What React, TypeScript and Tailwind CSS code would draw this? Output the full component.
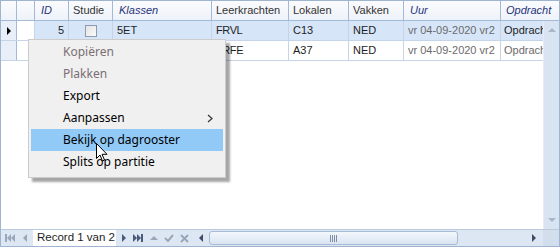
import React from "react";

const cols = [
  { key: "ind", w: 16 },
  { key: "sel", w: 18 },
  { key: "ID", w: 34, italic: true },
  { key: "Studie", w: 44 },
  { key: "Klassen", w: 99, italic: true },
  { key: "Leerkrachten", w: 77 },
  { key: "Lokalen", w: 60 },
  { key: "Vakken", w: 55 },
  { key: "Uur", w: 97, italic: true },
];

const rows = [
  { id: "5", klas: "5ET", lk: "FRVL", lok: "C13", vak: "NED", uur: "vr 04-09-2020 vr2", opd: "Opdracht", active: true },
  { id: "", klas: "", lk: "FRFE", lok: "A37", vak: "NED", uur: "vr 04-09-2020 vr2", opd: "Opdracht", active: false },
];

function Tri({ dir, className }: { dir: "l" | "r" | "u" | "d"; className?: string }) {
  const pts = { l: "5,0 5,8 1,4", r: "1,0 1,8 5,4", u: "0,5 8,5 4,1", d: "0,1 8,1 4,5" }[dir];
  const w = dir === "l" || dir === "r" ? 6 : 8;
  const h = dir === "l" || dir === "r" ? 8 : 6;
  return (
    <svg width={w} height={h} className={className}>
      <polygon points={pts} fill="currentColor" />
    </svg>
  );
}

function Cell({ w, children, className = "" }: { w: number; children?: React.ReactNode; className?: string }) {
  return (
    <div style={{ width: w }} className={`shrink-0 h-full border-r border-[#c5d4e8] flex items-center px-1 overflow-hidden whitespace-nowrap ${className}`}>
      {children}
    </div>
  );
}

export default function App() {
  return (
    <div className="w-[560px] h-[247px] bg-white relative overflow-hidden font-['Liberation_Sans',Arial,sans-serif] text-[11px] text-[#1e1e1e] select-none">
      <div className="w-full h-full border border-[#9fb4d1] flex flex-col">
        {/* header */}
        <div className="h-[20px] flex border-b border-[#a3b9d6] bg-gradient-to-b from-[#fafbfd] to-[#eef3fa] shrink-0">
          {cols.map((c) => (
            <div
              key={c.key}
              style={{ width: c.w }}
              className={`shrink-0 h-full border-r border-[#a3b9d6] flex items-center px-1 ${c.italic ? "italic text-[#27327a] pl-[6px]" : "text-[#333]"}`}
            >
              {c.key === "ind" || c.key === "sel" ? "" : c.key}
            </div>
          ))}
          <div className="flex-1 h-full flex items-center pl-[5px] italic text-[#27327a]">Opdracht</div>
        </div>

        {/* body */}
        <div className="flex-1 flex min-h-0">
          <div className="flex-1 flex flex-col">
            {rows.map((r, i) => (
              <div key={i} className={`h-[20px] flex border-b border-[#c5d4e8] ${r.active ? "bg-[#d7e5f8]" : "bg-white"}`}>
                <div className="w-[16px] shrink-0 h-full bg-[#e9eff8] border-r border-[#a3b9d6] flex items-center justify-center">
                  {r.active && <Tri dir="r" className="text-black" />}
                </div>
                <Cell w={18} className="bg-white" />
                <Cell w={34} className="justify-end">{r.id}</Cell>
                <Cell w={44} className="justify-center">
                  {r.active && <div className="w-[12px] h-[12px] border border-[#8d9bb0] bg-gradient-to-br from-[#e3e3e3] to-[#fbfbfb]" />}
                </Cell>
                <Cell w={99}>{r.klas}</Cell>
                <Cell w={77} className="tracking-[-0.4px]">{r.lk}</Cell>
                <Cell w={60}>{r.lok}</Cell>
                <Cell w={55}>{r.vak}</Cell>
                <Cell w={97} className="text-[#6b6b6b]">{r.uur}</Cell>
                <div className={`w-[42px] h-full flex items-center pl-[3px] overflow-hidden whitespace-nowrap ${r.active ? "" : "text-[#6b6b6b]"}`}>{r.opd}</div>
              </div>
            ))}
          </div>
          {/* vertical scrollbar */}
          <div className="w-[16px] shrink-0 bg-[#d9e4f2] border-l border-[#e6edf7] flex flex-col items-center justify-between py-[6px] text-[#a9b6c8]">
            <Tri dir="u" />
            <Tri dir="d" />
          </div>
        </div>

        {/* navigator + horizontal scrollbar */}
        <div className="h-[17px] shrink-0 flex border-t border-[#b9c9de] bg-[#dde7f4]">
          <div className="flex items-center h-full text-[#9aa7b8]">
            <svg width="10" height="8" className="ml-[4px]">
              <rect x="0" y="0" width="2" height="8" fill="currentColor" />
              <polygon points="6,0 6,8 2,4" fill="currentColor" />
              <polygon points="10,0 10,8 6,4" fill="currentColor" />
            </svg>
            <Tri dir="l" className="ml-[7px]" />
            <div className="ml-[5px] w-[83px] h-full bg-white flex items-center pl-[4px] text-[#1e1e1e] text-[11.5px]">Record 1 van 2</div>
            <Tri dir="r" className="ml-[5px] text-[#4a5a78]" />
            <svg width="10" height="8" className="ml-[6px] text-[#4a5a78]">
              <polygon points="0,0 0,8 4,4" fill="currentColor" />
              <polygon points="4,0 4,8 8,4" fill="currentColor" />
              <rect x="8" y="0" width="2" height="8" fill="currentColor" />
            </svg>
            <Tri dir="u" className="ml-[7px]" />
            <svg width="10" height="8" className="ml-[6px]">
              <polyline points="1,4 4,7 9,1" fill="none" stroke="currentColor" strokeWidth="2" />
            </svg>
            <svg width="9" height="9" className="ml-[6px]">
              <path d="M1 1 L8 8 M8 1 L1 8" stroke="currentColor" strokeWidth="2" />
            </svg>
          </div>
          <div className="flex-1 flex items-center h-full ml-[9px]">
            <Tri dir="l" className="text-[#3e4c66]" />
            <div className="ml-[5px] w-[249px] h-[14px] rounded-[3px] border border-[#a8bbd5] bg-gradient-to-b from-[#f3f7fc] to-[#d9e4f2] flex items-center justify-center">
              <svg width="7" height="7">
                <path d="M0.5 0 V7 M2.5 0 V7 M4.5 0 V7 M6.5 0 V7" stroke="#7f8fa8" strokeWidth="1" />
              </svg>
            </div>
            <div className="flex-1" />
            <Tri dir="r" className="mr-[6px] text-[#3e4c66]" />
          </div>
          <div className="w-[16px] shrink-0 bg-[#d3deec]" />
        </div>
      </div>

      {/* context menu */}
      <div className="absolute left-[28px] top-[39px] w-[198px] bg-[#f0f0f0] border border-[#cccccc] shadow-[4px_4px_2px_rgba(0,0,0,0.35)] py-[1px] px-[2px] font-['Noto_Sans',sans-serif] text-[12px] text-black">
        {[
          { t: "Kopiëren", dis: true },
          { t: "Plakken", dis: true },
          { t: "Export" },
          { t: "Aanpassen", sub: true },
          { t: "Bekijk op dagrooster", hi: true },
          { t: "Splits op partitie" },
        ].map((m) => (
          <div key={m.t} className={`h-[22px] flex items-center pl-[32px] pr-[10px] ${m.hi ? "bg-[#91c9f7]" : ""} ${m.dis ? "text-[#7a6e74]" : ""}`}>
            <span className="flex-1">{m.t}</span>
            {m.sub && (
              <svg width="6" height="9">
                <polyline points="1,1 5,4.5 1,8" fill="none" stroke="#333" strokeWidth="1.2" />
              </svg>
            )}
          </div>
        ))}
        <div className="h-[3px]" />
      </div>

      {/* mouse cursor */}
      <svg width="12" height="19" className="absolute left-[96px] top-[143px]" viewBox="0 0 12 19">
        <path d="M0.5 0.5 V15.5 L4 12 L6.5 18 L8.5 17 L6 11.3 H11 Z" fill="white" stroke="black" strokeWidth="1" strokeLinejoin="round" />
      </svg>
    </div>
  );
}
